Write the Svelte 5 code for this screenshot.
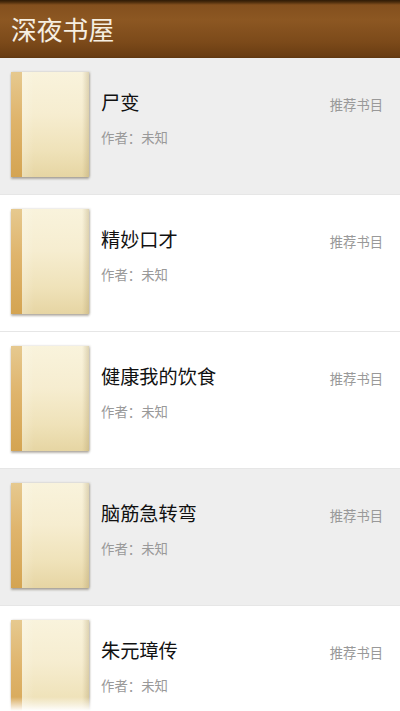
<script>
  const books = [
    { title: '尸变', on: true },
    { title: '精妙口才', on: false },
    { title: '健康我的饮食', on: false },
    { title: '脑筋急转弯', on: true },
    { title: '朱元璋传', on: false }
  ];
</script>

<div class="page">
  <header class="bar"><h1>深夜书屋</h1></header>
  <ul class="list">
    {#each books as b}
      <li class="row" class:on={b.on}>
        <div class="book"><div class="spine"></div><div class="cover"></div></div>
        <div class="info">
          <div class="title">{b.title}</div>
          <div class="author">作者：未知</div>
        </div>
        <div class="tag">推荐书目</div>
      </li>
    {/each}
  </ul>
  <div class="fade"></div>
</div>

<style>
  :global(body) {
    margin: 0;
    background: #fff;
  }
  .page {
    position: relative;
    width: 400px;
    height: 711px;
    overflow: hidden;
    font-family: "Noto Sans CJK SC", "Noto Sans", sans-serif;
  }
  .bar {
    height: 58px;
    box-sizing: border-box;
    padding-left: 11px;
    display: flex;
    align-items: center;
    background: linear-gradient(#2e1a06 0, #4a2b0c 2px, #84501e 5px, #8c5722 20px, #7c4a1a 42px, #6a3d13 56px, #5e3610 58px);
  }
  h1 {
    margin: 0;
    font-size: 25.8px;
    font-weight: 400;
    line-height: 1;
    color: #f6efe2;
  }
  .list {
    margin: 0;
    padding: 0;
    list-style: none;
  }
  .row {
    height: 137px;
    box-sizing: border-box;
    padding: 14px 17px 0 11px;
    display: flex;
    align-items: flex-start;
    border-bottom: 1px solid #e6e6e6;
    background: #fff;
  }
  .row.on {
    background: #eee;
  }
  .book {
    width: 78px;
    height: 105px;
    display: flex;
    flex: none;
    box-shadow: 0 2px 2px rgba(90, 80, 60, 0.4), 1px 0 2px rgba(90, 80, 60, 0.3);
  }
  .spine {
    width: 11px;
    background: linear-gradient(#e6c98f, #dfb46c 45%, #d4a452);
  }
  .cover {
    flex: 1;
    background:
      linear-gradient(90deg, rgba(255, 255, 255, 0.2) 0, rgba(255, 255, 255, 0) 12px, rgba(255, 255, 255, 0) 60px, rgba(170, 150, 100, 0.35) 100%),
      linear-gradient(#f9f3dc 0, #f6edd0 40%, #efe2b9 75%, #e6d5a3 100%);
  }
  .info {
    flex: 1;
    margin-left: 12px;
    min-width: 0;
  }
  .title {
    margin-top: 18px;
    font-size: 19.2px;
    line-height: 24px;
    color: #111;
  }
  .author {
    margin-top: 13px;
    font-size: 13.4px;
    line-height: 20px;
    color: #999;
  }
  .tag {
    margin-top: 23px;
    font-size: 13.3px;
    line-height: 20px;
    color: #999;
  }
  .fade {
    position: absolute;
    left: 0;
    right: 0;
    bottom: 0;
    height: 14px;
    background: linear-gradient(rgba(255, 255, 255, 0), #fff);
  }
</style>
